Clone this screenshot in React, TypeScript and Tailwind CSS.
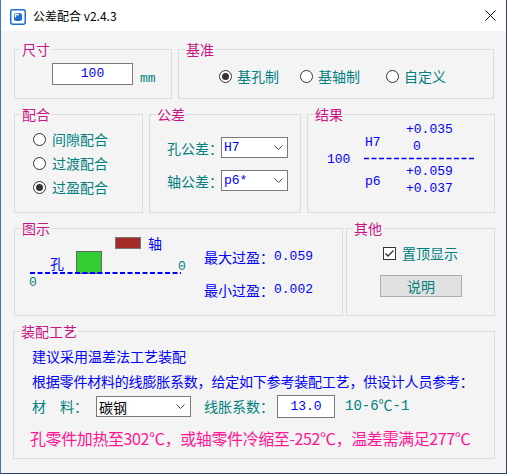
import type { ReactNode } from "react";

const cjk = "font-['Noto_Sans_CJK_SC',sans-serif]";
const mono = "font-['Liberation_Mono','Noto_Sans_CJK_SC',monospace]";

function Group({
  title,
  className,
  children,
}: {
  title: string;
  className: string;
  children?: ReactNode;
}) {
  return (
    <fieldset className={`min-w-0 border border-[#dcdcdc] ${className}`}>
      <legend className={`ml-[6px] px-px text-[14px] leading-[18px] text-[#c71585] ${cjk}`}>
        {title}
      </legend>
      {children}
    </fieldset>
  );
}

function Radio({
  label,
  checked = false,
  gap = "gap-[5px]",
  className = "",
}: {
  label: string;
  checked?: boolean;
  gap?: string;
  className?: string;
}) {
  return (
    <div className={`flex items-center ${gap} ${className}`}>
      <span className="flex h-[13px] w-[13px] items-center justify-center rounded-full border border-[#333333] bg-white">
        {checked && <span className="h-[7px] w-[7px] rounded-full bg-[#333333]" />}
      </span>
      <span className={`text-[14px] leading-[20px] text-[#008080] ${cjk}`}>{label}</span>
    </div>
  );
}

function Chevron() {
  return (
    <svg width="9" height="5" viewBox="0 0 9 5" className="shrink-0">
      <polyline points="0.5,0.5 4.5,4.5 8.5,0.5" fill="none" stroke="#444444" strokeWidth="1" />
    </svg>
  );
}

function Select({
  value,
  className,
  textClass,
}: {
  value: string;
  className: string;
  textClass: string;
}) {
  return (
    <div className={`flex items-center justify-between border border-[#7a7a7a] bg-white pl-[2px] ${className}`}>
      <span className={textClass}>{value}</span>
      <Chevron />
    </div>
  );
}

function TitleBar() {
  return (
    <div className="flex h-[31px] items-start bg-white">
      <svg width="16" height="16" viewBox="0 0 16 16" className="ml-[9px] mt-[9px]">
        <rect x="0.75" y="0.75" width="14.5" height="14.5" rx="2" fill="white" stroke="#1a6fd0" strokeWidth="1.5" />
        <rect x="4" y="4" width="8" height="8" rx="2.5" fill="#1a6fd0" />
        <path d="M5.5 8.5 V6 Q5.5 5.5 6 5.5 H9" fill="none" stroke="white" strokeWidth="1.3" />
      </svg>
      <span className={`ml-[7px] mt-[7px] text-[12px] leading-[17px] text-black ${cjk}`}>
        公差配合 v2.4.3
      </span>
      <svg width="11" height="11" viewBox="0 0 11 11" className="ml-auto mr-[10px] mt-[10px]">
        <path d="M0.5 0.5 L10.5 10.5 M10.5 0.5 L0.5 10.5" stroke="#111111" strokeWidth="1" />
      </svg>
    </div>
  );
}

export default function App() {
  return (
    <div className="flex h-[474px] w-[507px] flex-col border-b border-l border-r border-b-[#27446e] border-l-[#3a78c9] border-r-[#27446e] bg-[#f4f4f4]">
      <TitleBar />

      <div className="flex flex-col pl-[13px] pt-[9px]">
        {/* 尺寸 / 基准 */}
        <div className="flex gap-[6px]">
          <Group title="尺寸" className="h-[59px] w-[158px]">
            <div className="ml-[37px] mt-[5px] flex items-end">
              <div className={`flex h-[22px] w-[81px] items-center justify-center border border-[#7a7a7a] bg-white text-[13px] text-[#0000ff] ${mono}`}>
                100
              </div>
              <span className={`-mb-[2px] ml-[7px] text-[13px] leading-[16px] text-[#008080] ${mono}`}>mm</span>
            </div>
          </Group>
          <Group title="基准" className="h-[59px] w-[316px]">
            <div className="ml-[40px] mt-[8px] flex">
              <Radio label="基孔制" checked />
              <Radio label="基轴制" className="ml-[21px]" />
              <Radio label="自定义" className="ml-[26px]" />
            </div>
          </Group>
        </div>

        {/* 配合 / 公差 / 结果 */}
        <div className="mt-[6px] flex gap-[6px]">
          <Group title="配合" className="h-[108px] w-[129px]">
            <div className="ml-[18px] mt-[4px] flex flex-col">
              <Radio label="间隙配合" gap="gap-[6px]" className="h-[24px]" />
              <Radio label="过渡配合" gap="gap-[6px]" className="h-[24px]" />
              <Radio label="过盈配合" gap="gap-[6px]" className="h-[24px]" checked />
            </div>
          </Group>
          <Group title="公差" className="h-[108px] w-[152px]">
            <div className="ml-[17px] mt-[14px] flex flex-col gap-[12px]">
              <div className="flex items-center">
                <span className={`w-[54px] whitespace-nowrap text-[14px] leading-[20px] text-[#008080] ${cjk}`}>孔公差：</span>
                <Select value="H7" className="h-[21px] w-[67px] pr-[4px]" textClass={`text-[13px] text-[#0000ff] ${mono}`} />
              </div>
              <div className="flex items-center">
                <span className={`w-[54px] whitespace-nowrap text-[14px] leading-[20px] text-[#008080] ${cjk}`}>轴公差：</span>
                <Select value="p6*" className="h-[21px] w-[67px] pr-[4px]" textClass={`text-[13px] text-[#0000ff] ${mono}`} />
              </div>
            </div>
          </Group>
          <Group title="结果" className="h-[108px] w-[188px]">
            <div className={`-mt-[2px] ml-[19px] flex items-center text-[13px] leading-[17px] text-[#0000ff] ${mono}`}>
              <span className="w-[37px]">100</span>
              <div className="flex flex-col">
                <div className="flex">
                  <span className="w-[42px] pl-px pt-[13px]">H7</span>
                  <div className="flex flex-col">
                    <span>+0.035</span>
                    <span className="pl-[7px]">0</span>
                  </div>
                </div>
                <svg width="111" height="7" viewBox="0 0 111 7">
                  <line x1="0" y1="3.5" x2="111" y2="3.5" stroke="#0000ff" strokeWidth="1.5" strokeDasharray="5 2.5" />
                </svg>
                <div className="flex pt-px">
                  <span className="w-[42px] pl-px pt-[10px]">p6</span>
                  <div className="flex flex-col">
                    <span>+0.059</span>
                    <span>+0.037</span>
                  </div>
                </div>
              </div>
            </div>
          </Group>
        </div>

        {/* 图示 / 其他 */}
        <div className="mt-[6px] flex gap-[3px]">
          <Group title="图示" className="h-[97px] w-[329px]">
            <div className="flex">
              <div className="relative h-[60px] w-[189px] shrink-0">
                <div className="absolute left-[100px] top-0 h-[12px] w-[26px] border border-[#777777] bg-[#a52a2a]" />
                <span className={`absolute left-[133px] top-[-3px] text-[14px] leading-[18px] text-[#0000ff] ${cjk}`}>轴</span>
                <span className={`absolute left-[35px] top-[17px] text-[14px] leading-[18px] text-[#0000ff] ${cjk}`}>孔</span>
                <div className="absolute left-[61px] top-[14px] h-[23px] w-[26px] border border-[#666666] bg-[#32cd32]" />
                <svg width="151" height="2" viewBox="0 0 151 2" className="absolute left-[15px] top-[35px]">
                  <line x1="0" y1="1" x2="151" y2="1" stroke="#0000ff" strokeWidth="2" strokeDasharray="5 2.5" />
                </svg>
                <span className={`absolute left-[163px] top-[21px] text-[13px] leading-[18px] text-[#008080] ${mono}`}>0</span>
                <span className={`absolute left-[14px] top-[37px] text-[13px] leading-[18px] text-[#008080] ${mono}`}>0</span>
              </div>
              <div className="mt-[10px] flex flex-col gap-[13px] text-[#0000ff]">
                <div className="flex h-[20px] items-center">
                  <span className={`text-[14px] ${cjk}`}>最大过盈：</span>
                  <span className={`text-[13px] ${mono}`}>0.059</span>
                </div>
                <div className="flex h-[20px] items-center">
                  <span className={`text-[14px] ${cjk}`}>最小过盈：</span>
                  <span className={`text-[13px] ${mono}`}>0.002</span>
                </div>
              </div>
            </div>
          </Group>
          <Group title="其他" className="h-[97px] w-[149px]">
            <div className="ml-[36px] mt-[6px] flex h-[20px] items-center gap-[6px]">
              <span className="flex h-[13px] w-[13px] items-center justify-center border border-[#333333] bg-white">
                <svg width="11" height="11" viewBox="0 0 11 11">
                  <polyline points="1.5,5.5 4,8 9.5,2.5" fill="none" stroke="#333333" strokeWidth="1.3" />
                </svg>
              </span>
              <span className={`text-[14px] leading-[20px] text-[#008080] ${cjk}`}>置顶显示</span>
            </div>
            <div className={`ml-[33px] mt-[12px] flex h-[22px] w-[82px] items-center justify-center border border-[#adadad] bg-[#e1e1e1] text-[14px] text-[#008080] ${cjk}`}>
              说明
            </div>
          </Group>
        </div>

        {/* 装配工艺 */}
        <Group title="装配工艺" className="-ml-px mt-[6px] h-[137px] w-[482px]">
          <div className={`ml-[18px] mt-[4px] flex flex-col text-[14px] ${cjk}`}>
            <div className="flex h-[25px] items-center text-[#0000ff]">建议采用温差法工艺装配</div>
            <div className="flex h-[25px] items-center tracking-[-0.2px] text-[#0000ff]">
              根据零件材料的线膨胀系数，给定如下参考装配工艺，供设计人员参考：
            </div>
            <div className="flex h-[25px] items-center">
              <span className="w-[64px] whitespace-nowrap text-[#008080]">材　料：</span>
              <Select value="碳钢" className="h-[21px] w-[95px] pr-[5px]" textClass="text-[14px] leading-[18px] text-black" />
              <span className="ml-[13px] w-[73px] whitespace-nowrap text-[#008080]">线胀系数：</span>
              <div className={`flex h-[23px] w-[58px] items-center justify-center border border-[#7a7a7a] bg-white text-[13px] text-[#0000ff] ${mono}`}>
                13.0
              </div>
              <span className={`ml-[10px] text-[14px] text-[#008080] ${mono}`}>10-6℃-1</span>
            </div>
            <div className="-ml-[2px] mt-[6px] flex h-[25px] items-center whitespace-nowrap text-[16px] tracking-[-0.4px] text-[#ff1493]">
              孔零件加热至302℃，或轴零件冷缩至-252℃，温差需满足277℃
            </div>
          </div>
        </Group>
      </div>
    </div>
  );
}
